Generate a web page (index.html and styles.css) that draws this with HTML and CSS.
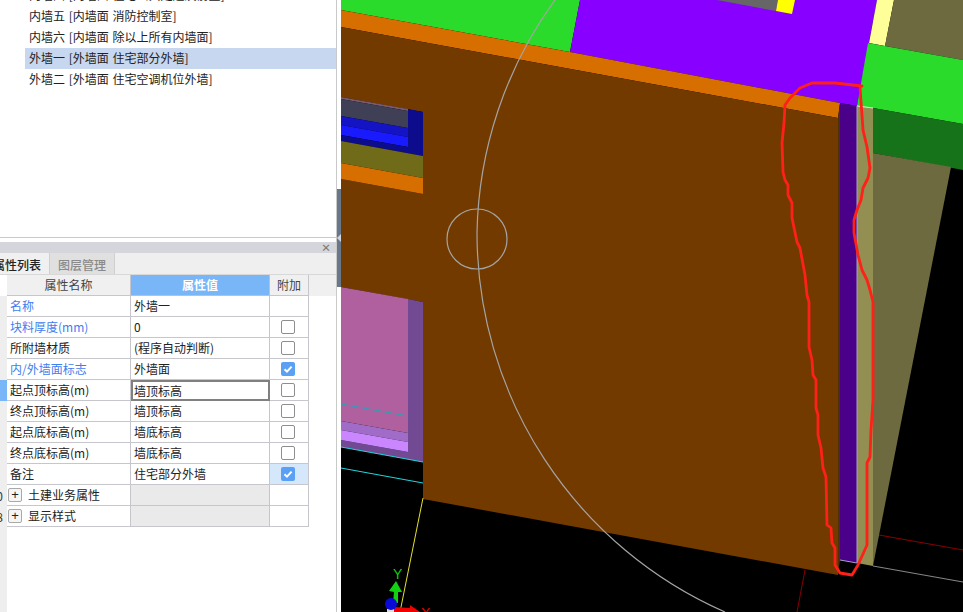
FILE: index.html
```html
<!DOCTYPE html>
<html lang="zh-CN">
<head>
<meta charset="utf-8">
<title>属性列表</title>
<link rel="stylesheet" href="styles.css">
</head>
<body>
<div class="app">
  <aside class="side">
    <ul class="list">
      <li class="list-row">内墙四 [内墙面 住宅公共走道及前室]</li>
      <li class="list-row">内墙五 [内墙面 消防控制室]</li>
      <li class="list-row">内墙六 [内墙面 除以上所有内墙面]</li>
      <li class="list-row selected">外墙一 [外墙面 住宅部分外墙]</li>
      <li class="list-row">外墙二 [外墙面 住宅空调机位外墙]</li>
    </ul>
    <div class="panel">
      <div class="panel-title"><span class="close">×</span></div>
      <div class="tabs">
        <div class="tab active"><span class="tab-label">属性列表</span></div>
        <div class="tab">图层管理</div>
      </div>
      <div class="table">
        <div class="row head">
          <div class="gut"></div>
          <div class="c name">属性名称</div>
          <div class="c val">属性值</div>
          <div class="c add">附加</div>
        </div>
        <div class="row">
          <div class="gut"></div>
          <div class="c name link">名称</div>
          <div class="c val">外墙一</div>
          <div class="c add"></div>
        </div>
        <div class="row">
          <div class="gut"></div>
          <div class="c name link">块料厚度(mm)</div>
          <div class="c val">0</div>
          <div class="c add"><span class="box"></span></div>
        </div>
        <div class="row">
          <div class="gut"></div>
          <div class="c name">所附墙材质</div>
          <div class="c val">(程序自动判断)</div>
          <div class="c add"><span class="box"></span></div>
        </div>
        <div class="row">
          <div class="gut"></div>
          <div class="c name link">内/外墙面标志</div>
          <div class="c val">外墙面</div>
          <div class="c add"><span class="box on"><svg class="tick" viewBox="0 0 14 14"><path d="M3.5 7.2 6 9.6 10.6 4.6"/></svg></span></div>
        </div>
        <div class="row">
          <div class="gut current"></div>
          <div class="c name">起点顶标高(m)</div>
          <div class="c val editing">墙顶标高</div>
          <div class="c add"><span class="box"></span></div>
        </div>
        <div class="row">
          <div class="gut"></div>
          <div class="c name">终点顶标高(m)</div>
          <div class="c val">墙顶标高</div>
          <div class="c add"><span class="box"></span></div>
        </div>
        <div class="row">
          <div class="gut"></div>
          <div class="c name">起点底标高(m)</div>
          <div class="c val">墙底标高</div>
          <div class="c add"><span class="box"></span></div>
        </div>
        <div class="row">
          <div class="gut"></div>
          <div class="c name">终点底标高(m)</div>
          <div class="c val">墙底标高</div>
          <div class="c add"><span class="box"></span></div>
        </div>
        <div class="row">
          <div class="gut"></div>
          <div class="c name">备注</div>
          <div class="c val">住宅部分外墙</div>
          <div class="c add tinted"><span class="box on"><svg class="tick" viewBox="0 0 14 14"><path d="M3.5 7.2 6 9.6 10.6 4.6"/></svg></span></div>
        </div>
        <div class="row">
          <div class="gut num"><span>20</span></div>
          <div class="c name group"><span class="plus">+</span>土建业务属性</div>
          <div class="c val blank"></div>
          <div class="c add"></div>
        </div>
        <div class="row">
          <div class="gut num"><span>38</span></div>
          <div class="c name group"><span class="plus">+</span>显示样式</div>
          <div class="c val blank"></div>
          <div class="c add"></div>
        </div>
        <div class="gutter-rest"></div>
      </div>
    </div>
  </aside>
  <div class="splitter">
    <div class="grip"></div>
  </div>
  <svg class="scene" viewBox="341 0 622 612" width="622" height="612">
    <rect class="black" x="341" y="0" width="622" height="612"/>

    <!-- top faces -->
    <polygon class="green" points="341,0 580,0 570,52 341,10"/>
    <polygon class="violet" points="580,0 877,0 857,106 840,103 570,52"/>
    <polygon class="grey" points="717,0 778,0 776,11"/>
    <polygon class="yellow" points="778,0 795,0 792,14 776,11"/>
    <polygon class="pale" points="877,0 894,0 885,46 869,43"/>
    <polygon class="olive" points="894,0 963,0 963,60 885,46"/>
    <polygon class="green" points="868,43 963,60 963,124 873,108 857,106"/>
    <polygon class="dkgreen" points="873,108 963,124 963,170 873,153"/>
    <polygon class="olive" points="873,153 951,167 873,566"/>

    <!-- main wall -->
    <polygon class="orange" points="341,10 570,52 840,103 838,118 341,27"/>
    <polygon class="brown" points="341,27 838,118 838,575 423,499 423,302 341,287 341,179 423,194 423,112 341,97"/>
    <polygon class="edge" points="840,103 840,560 838,575 838,118"/>
    <polygon class="indigo" points="840,103 857,106 857,563 840,560"/>
    <polygon class="khaki" points="857,106 873,108 873,566 857,563"/>

    <!-- upper opening -->
    <polygon class="mauve" points="341,97 408,109 408,111 341,99"/>
    <polygon class="slate" points="341,99 408,111 408,128 341,116"/>
    <polygon class="blue1" points="341,116 408,128 408,137 341,125"/>
    <polygon class="blue2" points="341,125 408,137 408,147 341,135"/>
    <polygon class="navy" points="408,109 423,112 423,156 341,141 341,135 408,147"/>
    <polygon class="moss" points="341,141 423,156 423,178 341,163"/>
    <polygon class="orange" points="341,163 423,178 423,194 341,179"/>

    <!-- lower opening -->
    <polygon class="pink" points="341,287 408,299 408,433 341,421"/>
    <polygon class="plum" points="408,299 423,302 423,462 341,447 341,440 408,452"/>
    <polygon class="lilac1" points="341,421 408,433 408,442 341,430"/>
    <polygon class="lilac2" points="341,430 408,442 408,452 341,440"/>

    <!-- thin lines -->
    <line class="ln-teal" x1="341" y1="404" x2="408" y2="416"/>
    <line class="ln-cyan" x1="341" y1="447" x2="423" y2="462"/>
    <line class="ln-cyan" x1="341" y1="468" x2="423" y2="483"/>
    <line class="ln-yellow" x1="423" y1="498" x2="400" y2="612"/>
    <line class="ln-grey" x1="873" y1="566" x2="963" y2="582"/>
    <line class="ln-red" x1="879" y1="535" x2="963" y2="550"/>
    <line class="ln-red" x1="805" y1="570" x2="797" y2="612"/>
    <line class="ln-white" x1="857" y1="106" x2="873" y2="108"/>
    <line class="ln-lav" x1="840" y1="560" x2="857" y2="563"/>
    <line class="ln-lav" x1="857" y1="106" x2="857" y2="563"/>

    <!-- cursor arc and circle -->
    <path class="arc" d="M555 0A408 408 0 0 0 477 233A414 414 0 0 0 725 612"/>
    <circle class="arc" cx="477" cy="239" r="30"/>

    <!-- axis -->
    <polygon class="ax-green" points="396,581 402,592 398,592 398,603 393,603 394,592 389,591"/>
    <text class="ax-y" x="393" y="579">Y</text>
    <polygon class="ax-red" points="394,607 410,608 410,605 420,612 394,612"/>
    <text class="ax-x" x="421" y="618">X</text>
    <rect class="ax-white" x="387" y="608" width="7" height="4"/>
    <circle class="ax-blue" cx="391" cy="604" r="6"/>

    <!-- hand-drawn mark -->
    <polyline class="mark" points="862,86 835,83 812,83 800,88 790,98 785,105 784,123 782,143 783,172 785,180 788,185 788,195 792,203 792,218 797,242 800,248 805,275 807,295 809,302 809,347 812,360 813,375 816,380 816,408 818,415 818,435 821,448 823,468 826,477 827,525 831,528 832,543 835,548 835,565 840,573 852,575 858,565 867,545 867,463 870,457 871,430 873,400 873,302 870,290 867,280 862,270 858,255 854,233 854,220 857,210 861,200 863,188 868,178 870,168 867,147 863,130 860,87"/>
  </svg>
</div>
</body>
</html>
```

FILE: styles.css
```css
* { box-sizing: border-box; }
html, body { margin: 0; padding: 0; background: #fff; }
body {
  width: 963px;
  height: 612px;
  overflow: hidden;
  font: 12px/20px "Noto Sans CJK SC", "Liberation Sans", sans-serif;
  color: #222;
}
.app { display: flex; width: 963px; height: 612px; overflow: hidden; }

/* left column */
.side {
  width: 337px;
  flex: none;
  display: flex;
  flex-direction: column;
  border-right: 1px solid #c9c9c9;
  background: #fff;
}
.list {
  list-style: none;
  margin: 0;
  padding: 0;
  height: 238px;
  flex: none;
  overflow: hidden;
  border-bottom: 1px solid #c9c9cc;
}
.list-row {
  height: 21px;
  line-height: 19px;
  margin-left: 25px;
  padding-left: 4px;
  white-space: nowrap;
  word-spacing: 1px;
}
.list-row:first-child { margin-top: -15px; }
.selected { background: #c7d7ef; }

.panel { flex: 1; display: flex; flex-direction: column; padding-top: 4px; min-height: 0; }
.panel-title {
  height: 11px;
  flex: none;
  background: #d5d6db;
  display: flex;
  justify-content: flex-end;
  align-items: center;
  padding-right: 5px;
}
.close { font-size: 10px; line-height: 11px; color: #777; font-weight: 700; }
.tabs {
  height: 22px;
  flex: none;
  display: flex;
  background: #efefef;
  border-bottom: 1px solid #d8d8d8;
}
.tab {
  width: 65px;
  padding-left: 8px;
  line-height: 23px;
  background: #e0e0e0;
  color: #8a8a8a;
  border-right: 1px solid #cfcfcf;
  font-weight: 500;
}
.tab.active {
  width: 50px;
  padding: 0;
  background: #f0f0f0;
  color: #222;
  overflow: hidden;
  display: flex;
  justify-content: flex-end;
  border-right: 1px solid #cfcfcf;
}
.tab-label { flex: none; padding-right: 8px; }

/* table */
.table { flex: 1; display: flex; flex-direction: column; min-height: 0; }
.row {
  display: grid;
  grid-template-columns: 7px 124px 139px 39px;
  height: 21px;
  flex: none;
}
.head { background: linear-gradient(#f0f0f0, #f0f0f0) no-repeat 309px 0 / 28px 100%; }
.gut {
  background: #eeeeee;
  overflow: hidden;
  display: flex;
  justify-content: flex-end;
  padding-right: 4px;
}
.head .gut { background: #fff; }
.gut.current { background: #79b6f7; }
.gut.num span { flex: none; color: #333; line-height: 21px; }
.gutter-rest { flex: 1; width: 7px; background: #eeeeee; }
.c {
  border-right: 1px solid #c6c6cc;
  border-bottom: 1px solid #c6c6cc;
  white-space: nowrap;
  overflow: hidden;
  line-height: 20px;
}
.name { padding-left: 3px; }
.val { padding-left: 3px; }
.link { color: #3f7df0; }
.head .c { text-align: center; padding: 0; background: #f0f0f0; line-height: 20px; color: #444; }
.head .val { background: #79b6f7; color: #fff; font-weight: 700; border-right-color: #9cc8f5; border-bottom-color: #9cc8f5; }
.add { display: flex; align-items: center; justify-content: center; padding-right: 2px; }
.tinted { background: #d5e8fb; }
.editing { border: 2px solid #808080; padding-left: 1px; line-height: 17px; margin-left: 0; }
.blank { background: #eaeaea; }
.group { padding-left: 1px; display: flex; align-items: center; }
.plus {
  width: 14px;
  height: 14px;
  flex: none;
  margin-right: 6px;
  border: 1px solid #a9a9a9;
  border-radius: 2px;
  background: #f5f5f5;
  color: #222;
  font: 13px/12px "Liberation Sans", sans-serif;
  text-align: center;
}
.box {
  width: 14px;
  height: 14px;
  display: block;
  border: 1px solid #8e8e8e;
  border-radius: 2px;
  background: #fff;
}
.box.on { border: 0; background: #5aa0f5; }
.tick { display: block; width: 14px; height: 14px; fill: none; stroke: #fff; stroke-width: 2; }

/* splitter */
.splitter {
  width: 4px;
  flex: none;
  background: linear-gradient(#fff, #fff) no-repeat 0 0 / 100% 189px,
              linear-gradient(#fff, #fff) no-repeat 0 287px / 100% 325px,
              #66788a;
  position: relative;
}
.grip {
  position: absolute;
  left: 0;
  top: 234px;
  width: 0;
  height: 0;
  border-top: 4px solid transparent;
  border-bottom: 4px solid transparent;
  border-right: 4px solid #d5d6db;
}

/* 3D scene */
.scene { display: block; flex: none; }
.black { fill: #000; }
.green { fill: #2bdb2b; }
.violet { fill: #8800ff; }
.grey { fill: #666; }
.yellow { fill: #ffff00; }
.pale { fill: #ffff99; }
.olive { fill: #6c6a3e; }
.dkgreen { fill: #17731a; }
.orange { fill: #d66e00; }
.brown { fill: #733a00; }
.edge { fill: #4f3200; }
.indigo { fill: #4a0088; }
.khaki { fill: #938e52; }
.mauve { fill: #7a5a70; }
.slate { fill: #3f4055; }
.blue1 { fill: #1414c4; }
.blue2 { fill: #1a1aff; }
.navy { fill: #0c0c8c; }
.moss { fill: #6f6b18; }
.pink { fill: #b0609f; }
.plum { fill: #714a93; }
.lilac1 { fill: #a06cc8; }
.lilac2 { fill: #c986ff; }
.ln-teal { stroke: #2aa0b8; stroke-width: 1; }
.ln-cyan { stroke: #22d6dc; stroke-width: 1; }
.ln-yellow { stroke: #e6e22a; stroke-width: 1; }
.ln-grey { stroke: #888; stroke-width: 1; }
.ln-red { stroke: #8a0000; stroke-width: 1; }
.ln-white { stroke: #f4f4e8; stroke-width: 1; }
.ln-lav { stroke: #a9a0c4; stroke-width: 1; }
.arc { fill: none; stroke: #a4a4a4; stroke-width: 1.2; }
.mark { fill: none; stroke: #ff2018; stroke-width: 2.8; stroke-linejoin: round; stroke-linecap: round; }
.ax-green { fill: #12d012; }
.ax-red { fill: #f00000; }
.ax-blue { fill: #0a0ad8; }
.ax-white { fill: #ddd; }
.ax-y { fill: #12d012; font: 14px "Liberation Sans", sans-serif; }
.ax-x { fill: #f00000; font: 14px "Liberation Sans", sans-serif; }
```
